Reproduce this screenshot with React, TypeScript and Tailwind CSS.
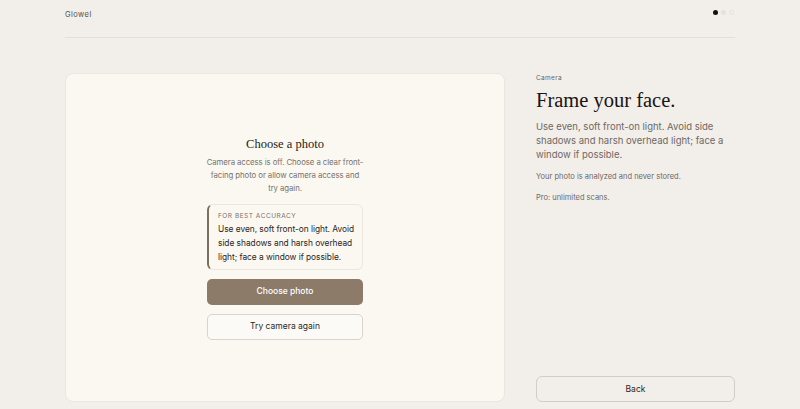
import React from "react";

const sans = { fontFamily: "Inter, 'Liberation Sans', sans-serif" };
const serif = { fontFamily: "'Liberation Serif', 'DejaVu Serif', serif" };

export default function App() {
  return (
    <div
      className="w-[800px] h-[409px] bg-[#f2eeea] overflow-hidden"
      style={sans}
    >
      <div className="w-[670px] mx-auto">
        <header className="h-[38px] flex items-start justify-between border-b border-[#e4dfd9] pt-[9px]">
          <span className="text-[7.5px] tracking-[0.06em] text-[#55504a]">Glowel</span>
          <div className="flex items-center gap-[3px] pt-[1px] pr-[1px]">
            <span className="w-[5px] h-[5px] rounded-full bg-[#111]" />
            <span className="w-[5px] h-[5px] rounded-full bg-[#e6e1db]" />
            <span className="w-[5px] h-[5px] rounded-full border border-[#e6e1db]" />
          </div>
        </header>

        <div className="flex gap-[31px] mt-[35px]">
          <section className="w-[440px] shrink-0 h-[329px] rounded-[8px] bg-[#fbf8f2] border border-[#ebe6df] flex items-center justify-center">
            <div className="w-[156px] flex flex-col items-center">
              <h2 className="text-[12.5px] text-[#1f1b17] leading-[16px]" style={serif}>
                Choose a photo
              </h2>
              <p className="mt-[4px] w-[159px] text-[7.8px] tracking-[-0.01em] leading-[13px] text-[#77726b] text-center">
                Camera access is off. Choose a clear front-facing photo or allow camera access and try again.
              </p>
              <div className="mt-[9px] w-full rounded-[6px] border border-[#ebe6df] border-l-2 border-l-[#7d6f5f] bg-[#fbf8f2] pl-[9px] pr-[4px] pt-[6px] pb-[5px]">
                <div className="text-[6.5px] tracking-[0.08em] text-[#77726b] leading-[10px]">
                  FOR BEST ACCURACY
                </div>
                <p className="mt-[1px] text-[8.4px] tracking-[-0.005em] leading-[14px] text-[#2b2723]">
                  Use even, soft front-on light. Avoid side shadows and harsh overhead light; face a window if possible.
                </p>
              </div>
              <button className="mt-[9px] w-full h-[26px] rounded-[5px] bg-[#8b7b68] text-white text-[8.5px] font-medium">
                Choose photo
              </button>
              <button className="mt-[9px] w-full h-[26px] rounded-[5px] border border-[#d9d3cb] bg-[#fcfaf6] text-[#2b2723] text-[8.5px]">
                Try camera again
              </button>
            </div>
          </section>

          <aside className="w-[199px] shrink-0 h-[329px] flex flex-col justify-between">
            <div className="pt-[1px]">
              <div className="text-[6.5px] tracking-[0.05em] text-[#6a655f] leading-[8px]">Camera</div>
              <h1 className="mt-[6px] text-[20.5px] leading-[24px] text-[#171411]" style={serif}>
                Frame your face.
              </h1>
              <p className="mt-[8px] text-[9.5px] leading-[14px] text-[#6e6963]">
                Use even, soft front-on light. Avoid side shadows and harsh overhead light; face a window if possible.
              </p>
              <p className="mt-[9px] text-[7.5px] leading-[12px] text-[#6e6963]">
                Your photo is analyzed and never stored.
              </p>
              <p className="mt-[9px] text-[7.5px] leading-[12px] text-[#6e6963]">
                Pro: unlimited scans.
              </p>
            </div>
            <button className="w-full h-[26px] rounded-[6px] border border-[#d3cdc5] bg-[#f2eeea] text-[8.5px] text-[#2b2723]">
              Back
            </button>
          </aside>
        </div>
      </div>
    </div>
  );
}
